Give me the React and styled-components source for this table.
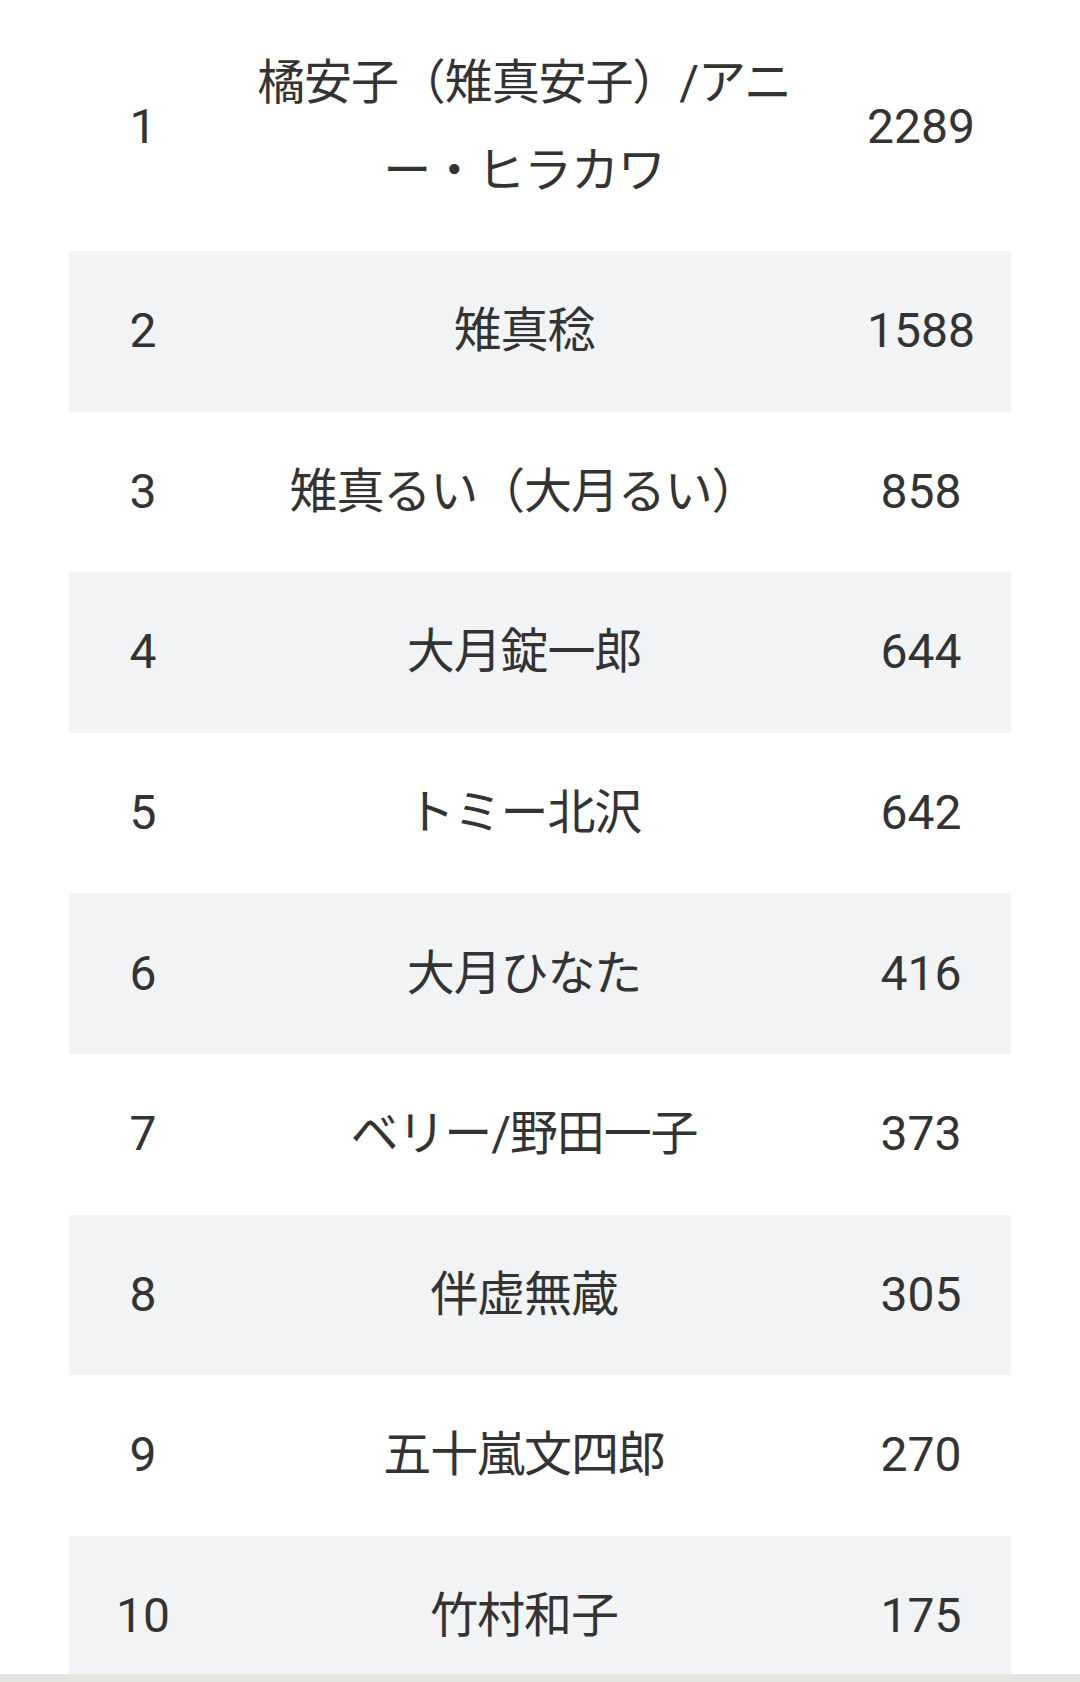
import React from "react";
import styled, { createGlobalStyle } from "styled-components";

const Global = createGlobalStyle`
  html, body { margin: 0; padding: 0; background: #ffffff; }
  body { font-family: Roboto, "Noto Sans CJK JP", sans-serif; }
`;

const Screen = styled.div`
  height: 1682px;
  display: flex;
  flex-direction: column;
  overflow: hidden;
  background: #ffffff;
`;

const Scroll = styled.div`
  flex: 1;
  overflow: hidden;
  padding: 0 69px;
`;

const Table = styled.table`
  width: 942px;
  margin-top: 2.4px;
  border-collapse: collapse;
  table-layout: fixed;
  color: #333333;
  font-size: 48px;
  line-height: 88px;
`;

const Row = styled.tr`
  background: ${(p) => (p.$shaded ? "#f2f3f5" : "transparent")};
`;

const Cell = styled.td`
  padding: 36.3px 0;
  text-align: center;
  vertical-align: middle;
  font-family: Roboto, "Noto Sans CJK JP", sans-serif;
`;

const NameCell = styled(Cell)`
  padding-left: 24px;
  padding-right: 24px;
  letter-spacing: -1.1px;
  line-break: normal;
`;

const BottomBar = styled.div`
  height: 8px;
  flex: none;
  background: #e3e5e1;
`;

const rows = [
  ["1", "橘安子（雉真安子）/アニー・ヒラカワ", "2289"],
  ["2", "雉真稔", "1588"],
  ["3", "雉真るい（大月るい）", "858"],
  ["4", "大月錠一郎", "644"],
  ["5", "トミー北沢", "642"],
  ["6", "大月ひなた", "416"],
  ["7", "ベリー/野田一子", "373"],
  ["8", "伴虚無蔵", "305"],
  ["9", "五十嵐文四郎", "270"],
  ["10", "竹村和子", "175"],
];

export default function App() {
  return (
    <>
      <Global />
      <Screen>
        <Scroll>
          <Table>
            <colgroup>
              <col style={{ width: 148 }} />
              <col style={{ width: 614 }} />
              <col style={{ width: 180 }} />
            </colgroup>
            <tbody>
              {rows.map(([rank, name, count], i) => (
                <Row key={rank} $shaded={i % 2 === 1}>
                  <Cell>{rank}</Cell>
                  <NameCell>{name}</NameCell>
                  <Cell>{count}</Cell>
                </Row>
              ))}
            </tbody>
          </Table>
        </Scroll>
        <BottomBar />
      </Screen>
    </>
  );
}
